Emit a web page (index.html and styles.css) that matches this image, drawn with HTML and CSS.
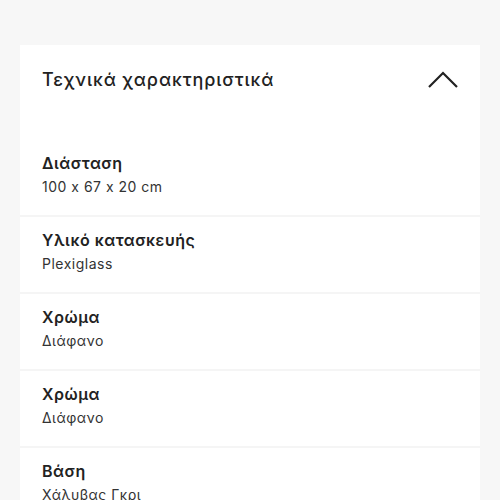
FILE: index.html
```html
<!DOCTYPE html>
<html lang="el">
<head>
    <meta charset="UTF-8">
    <meta name="viewport" content="width=device-width, initial-scale=1.0">
    <title>Τεχνικά χαρακτηριστικά</title>
    <link rel="stylesheet" href="styles.css">
</head>
<body>
    <div class="specs">
        <div class="specs-header">
            <h2>Τεχνικά χαρακτηριστικά</h2>
            <svg class="chevron" width="30" height="18" viewBox="0 0 30 18">
                <polyline points="1,16 15,2 29,16" fill="none" stroke="#222" stroke-width="2.2"/>
            </svg>
        </div>
        <div class="specs-list">
            <div class="spec-row">
                <div class="spec-label">Διάσταση</div>
                <div class="spec-value">100 x 67 x 20 cm</div>
            </div>
            <div class="spec-row">
                <div class="spec-label">Υλικό κατασκευής</div>
                <div class="spec-value">Plexiglass</div>
            </div>
            <div class="spec-row">
                <div class="spec-label">Χρώμα</div>
                <div class="spec-value">Διάφανο</div>
            </div>
            <div class="spec-row">
                <div class="spec-label">Χρώμα</div>
                <div class="spec-value">Διάφανο</div>
            </div>
            <div class="spec-row">
                <div class="spec-label">Βάση</div>
                <div class="spec-value">Χάλυβας Γκρι</div>
            </div>
        </div>
    </div>
</body>
</html>
```

FILE: styles.css
```css
body {
    font-family: Inter, "Noto Sans", sans-serif;
    font-feature-settings: "calt" 0;
    background-color: #f7f7f7;
    margin: 0;
    padding: 45px 20px 0;
    color: #222;
}

.specs {
    background-color: #f5f5f5;
}

.specs-header {
    background-color: #fff;
    height: 70px;
    padding: 0 22px;
    display: flex;
    align-items: center;
    justify-content: space-between;
}

.specs-header h2 {
    margin: 0;
    font-size: 18px;
    font-weight: 500;
    line-height: 22px;
    letter-spacing: 0.9px;
}

.chevron {
    display: block;
}

.specs-list {
    display: flex;
    flex-direction: column;
    gap: 2px;
}

.spec-row {
    background-color: #fff;
    padding: 13px 22px 18px;
}

.specs-list .spec-row:first-child {
    padding-top: 38px;
}

.spec-label {
    font-size: 16px;
    font-weight: 600;
    line-height: 20px;
    letter-spacing: 0.5px;
}

.spec-value {
    font-size: 14px;
    line-height: 20px;
    margin-top: 4px;
    color: #333;
    letter-spacing: 0.5px;
}
```
